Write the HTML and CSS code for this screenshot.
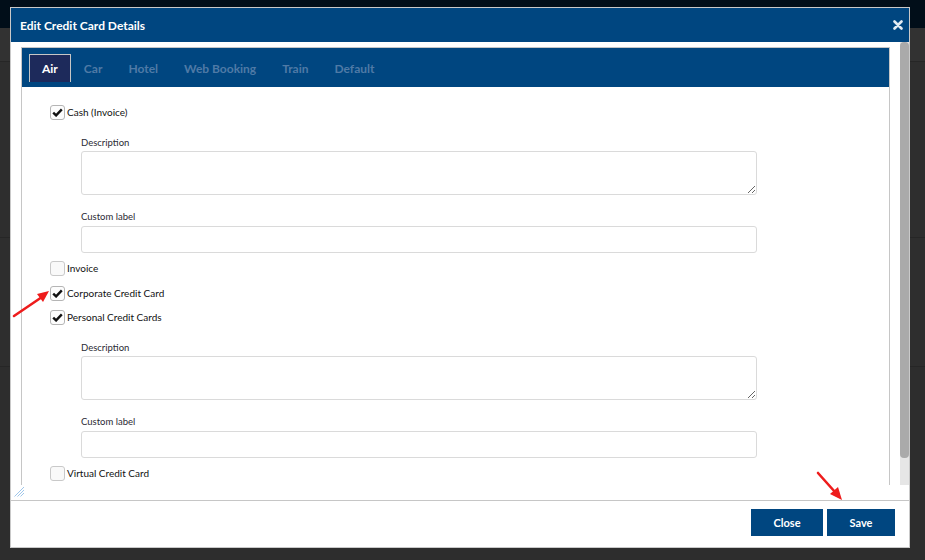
FILE: index.html
```html
<!DOCTYPE html>
<html>
<head>
<meta charset="utf-8">
<link rel="stylesheet" href="styles.css">
</head>
<body>
<div class="backdrop">
  <div class="bd-top"></div>
  <div class="bd-row bd-r1"></div>
  <div class="bd-row bd-r2"></div>
  <div class="bd-row bd-r3"></div>
  <div class="bd-row bd-r4"></div>
</div>

<div class="dialog">
  <div class="dlg-header">
    <span class="dlg-title">Edit Credit Card Details</span>
    <svg class="dlg-close" width="10" height="10" viewBox="0 0 10 10"><path d="M1.5 1.5 L8.5 8.5 M8.5 1.5 L1.5 8.5" stroke="#e3ebf2" stroke-width="2.6" stroke-linecap="round"/></svg>
  </div>
  <div class="dlg-body">
    <div class="scroll">
      <div class="scroll-content">
        <div class="tabs">
          <ul class="tab-bar">
            <li class="tab active">Air</li>
            <li class="tab">Car</li>
            <li class="tab">Hotel</li>
            <li class="tab">Web Booking</li>
            <li class="tab">Train</li>
            <li class="tab">Default</li>
          </ul>
          <div class="panel">
            <div class="check-row">
              <span class="cb checked"><svg width="11" height="9" viewBox="0 0 11 9"><path d="M1.2 4.6 L4.1 7.4 L9.8 1.4" fill="none" stroke="#111" stroke-width="2.4"/></svg></span>
              <span class="cb-label">Cash (Invoice)</span>
            </div>
            <div class="sub">
              <div class="field-label desc">Description</div>
              <textarea class="field-area"></textarea>
              <div class="field-label custom">Custom label</div>
              <input class="field-input" type="text">
            </div>
            <div class="check-row">
              <span class="cb"></span>
              <span class="cb-label">Invoice</span>
            </div>
            <div class="check-row corp">
              <span class="cb checked"><svg width="11" height="9" viewBox="0 0 11 9"><path d="M1.2 4.6 L4.1 7.4 L9.8 1.4" fill="none" stroke="#111" stroke-width="2.4"/></svg></span>
              <span class="cb-label">Corporate Credit Card</span>
            </div>
            <div class="check-row">
              <span class="cb checked"><svg width="11" height="9" viewBox="0 0 11 9"><path d="M1.2 4.6 L4.1 7.4 L9.8 1.4" fill="none" stroke="#111" stroke-width="2.4"/></svg></span>
              <span class="cb-label">Personal Credit Cards</span>
            </div>
            <div class="sub">
              <div class="field-label desc">Description</div>
              <textarea class="field-area"></textarea>
              <div class="field-label custom">Custom label</div>
              <input class="field-input" type="text">
            </div>
            <div class="check-row">
              <span class="cb"></span>
              <span class="cb-label">Virtual Credit Card</span>
            </div>
          </div>
        </div>
      </div>
      <div class="scrollbar"><div class="thumb"></div></div>
    </div>
    <svg class="resize-handle" width="11" height="11" viewBox="0 0 11 11">
      <path d="M0.5 10.5 L10 1 M3.5 10.5 L10 4 M6.5 10.5 L10 7" stroke="#9fc6ea" stroke-width="1"/>
    </svg>
  </div>
  <div class="dlg-footer">
    <button class="btn btn-close">Close</button>
    <button class="btn btn-save">Save</button>
  </div>
</div>

<svg class="annotations" width="925" height="560" viewBox="0 0 925 560">
  <line x1="14" y1="316" x2="42" y2="297" stroke="#ee1c1c" stroke-width="2.6" stroke-linecap="round"/>
  <polygon points="49,291 37,294 43,302" fill="#ee1c1c"/>
  <line x1="818" y1="473" x2="835" y2="492" stroke="#ee1c1c" stroke-width="2.6" stroke-linecap="round"/>
  <polygon points="842,500 830,494 838,487" fill="#ee1c1c"/>
</svg>
</body>
</html>
```

FILE: styles.css
```css
* {
  box-sizing: border-box;
}

html, body {
  margin: 0;
  padding: 0;
}

body {
  width: 925px;
  height: 560px;
  overflow: hidden;
  position: relative;
  background: #2d2d2d;
  font-family: Lato, "Liberation Sans", sans-serif;
}

/* page behind the dialog */
.bd-top {
  height: 28px;
  background: #010e19;
}
.bd-row {
  border-bottom: 1px solid #262626;
}
.bd-r1 { height: 34px; background: #323232; }
.bd-r2 { height: 176px; background: #2e2e2e; }
.bd-r3 { height: 129px; background: #2e2e2e; }
.bd-r4 { height: 193px; background: #2d2d2d; border-bottom: none; }

/* dialog */
.dialog {
  position: absolute;
  left: 10px;
  top: 7px;
  width: 900px;
  height: 541px;
  border: 1px solid #c9c9c9;
  background: #fff;
  display: flex;
  flex-direction: column;
}

.dlg-header {
  height: 34px;
  flex: none;
  background: #004680;
  display: flex;
  align-items: center;
  justify-content: space-between;
  padding: 0 6px 0 9px;
}
.dlg-title {
  color: #fff;
  font-weight: 700;
  font-size: 12px;
}
.dlg-close {
  display: block;
}

.dlg-body {
  height: 458px;
  flex: none;
  position: relative;
  padding-bottom: 15px;
}
.scroll {
  height: 443px;
  display: flex;
}
.scroll-content {
  flex: 1;
  padding: 5px 10px 0 10px;
  overflow: hidden;
}
.scrollbar {
  width: 9px;
  flex: none;
  background: #e6e6e6;
}
.thumb {
  height: 416px;
  background: #aaaaaa;
  border-radius: 4px;
}

/* tabs */
.tabs {
  border: 1px solid #c6c6c6;
  height: 500px;
}
.tab-bar {
  list-style: none;
  margin: 0;
  height: 39px;
  background: #004680;
  display: flex;
  align-items: flex-start;
  padding: 6px 0 0 7px;
}
.tab {
  height: 28px;
  padding: 0 12px 1px;
  border: 1px solid transparent;
  border-bottom: none;
  display: flex;
  align-items: center;
  font-weight: 700;
  font-size: 12px;
  color: #4f7aa6;
}
.tab.active {
  background: #1d2a5b;
  border-color: #c6c6c6;
  color: #fff;
}

.panel {
  padding: 13px 0 0 28px;
}
.check-row {
  height: 24px;
  display: flex;
  align-items: center;
}
.check-row.corp {
  margin-top: 1px;
}
.cb {
  width: 15px;
  height: 15px;
  border: 1px solid #c9c9c9;
  border-radius: 3px;
  background: #f9f9f9;
  margin-right: 2px;
  display: flex;
  align-items: center;
  justify-content: center;
}
.cb.checked {
  background: #fdfdfd;
  border-color: #b5b5b5;
}
.cb svg {
  display: block;
}
.cb-label {
  font-size: 10px;
  color: #111;
}

.sub {
  margin-left: 31px;
  padding-bottom: 3px;
}
.field-label {
  font-size: 9.5px;
  line-height: 12px;
  color: #2a2a33;
}
.field-label.desc {
  margin: 13px 0 2px;
}
.field-label.custom {
  margin: 16px 0 3px;
}
.field-area {
  display: block;
  width: 676px;
  height: 44px;
  margin: 0;
  border: 1px solid #dadada;
  border-radius: 3px;
  background: #fff;
  font-family: Lato, "Liberation Sans", sans-serif;
}
.field-input {
  display: block;
  width: 676px;
  height: 27px;
  margin: 0;
  border: 1px solid #dadada;
  border-radius: 3px;
  background: #fff;
  outline: none;
}

.resize-handle {
  position: absolute;
  left: 3px;
  bottom: 3px;
}

/* footer */
.dlg-footer {
  flex: 1;
  border-top: 1px solid #c6c6c6;
  display: flex;
  justify-content: flex-end;
  align-items: flex-start;
  gap: 4px;
  padding: 8px 14px 0 0;
}
.btn {
  height: 27px;
  border: none;
  background: #004680;
  color: #fff;
  font-family: Lato, "Liberation Sans", sans-serif;
  font-weight: 700;
  font-size: 11px;
  padding: 0;
}
.btn-close { width: 72px; }
.btn-save { width: 68px; }

.annotations {
  position: absolute;
  left: 0;
  top: 0;
  pointer-events: none;
}
```
